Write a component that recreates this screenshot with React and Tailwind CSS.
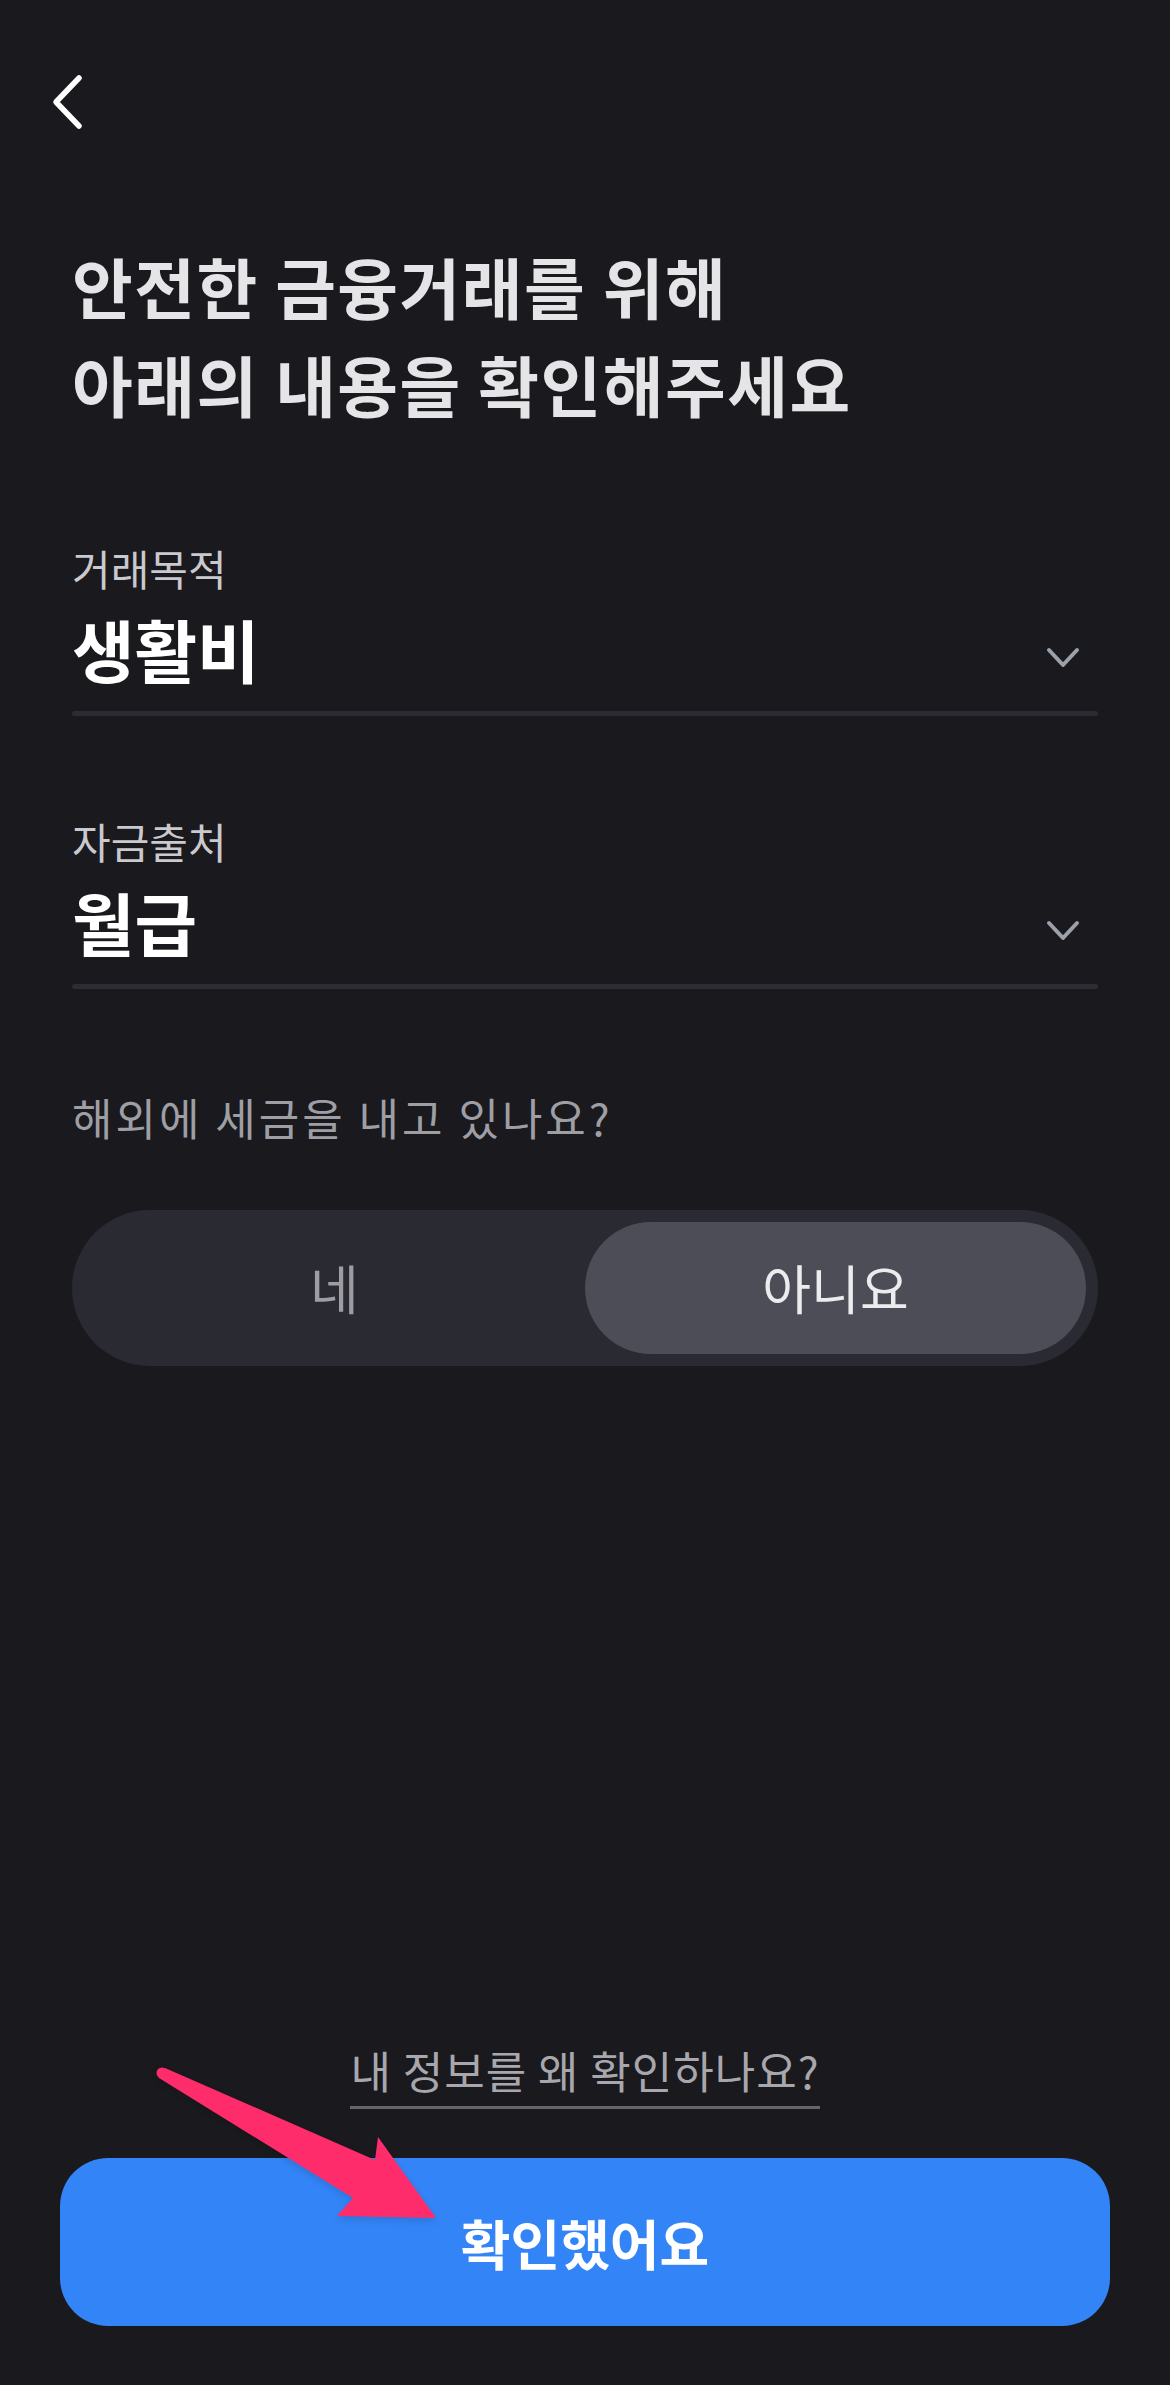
import { useState } from "react";

const font = { fontFamily: '"Noto Sans CJK KR", "Noto Sans", sans-serif' };

const BackIcon = () => (
  <svg width="36" height="56" viewBox="0 0 36 56" fill="none">
    <path d="M31 4 L8 28 L31 52" stroke="#ffffff" strokeWidth="5.5" strokeLinecap="round" strokeLinejoin="round" />
  </svg>
);

const ChevronDown = () => (
  <svg width="34" height="22" viewBox="0 0 34 22" fill="none">
    <path d="M3 3 L17 18 L31 3" stroke="#9aa1ab" strokeWidth="4" strokeLinecap="round" strokeLinejoin="round" />
  </svg>
);

// 선택 필드 (라벨 + 값 + 밑줄)
const SelectField = ({ label, value }) => (
  <div className="flex flex-col">
    <div className="text-[42px] leading-[48px] text-[#c9c9ce]">{label}</div>
    <div className="mt-[17px] flex items-center justify-between">
      <span className="text-[68px] leading-[80px] font-semibold text-white">{value}</span>
      <span className="mr-[18px] mt-[18px]"><ChevronDown /></span>
    </div>
    <div className="mt-[22px] h-[5px] rounded-full bg-[#2c2c34]" />
  </div>
);

export default function App() {
  const [taxAbroad, setTaxAbroad] = useState(false);

  return (
    <div style={font} className="relative flex h-[2385px] w-[1170px] flex-col bg-[#1a191e]">
      {/* Header */}
      <div className="pl-[48px] pt-[74px]">
        <BackIcon />
      </div>

      <div className="flex flex-1 flex-col px-[72px]">
        <h1 className="mt-[106px] text-[66px] leading-[98px] tracking-[1.5px] font-bold text-[#e5e5e8]">
          안전한 금융거래를 위해
          <br />
          아래의 내용을 확인해주세요
        </h1>

        <div className="mt-[112px]">
          <SelectField label="거래목적" value="생활비" />
        </div>
        <div className="mt-[101px]">
          <SelectField label="자금출처" value="월급" />
        </div>

        <p className="mt-[103px] text-[44px] leading-[50px] tracking-[3px] text-[#9e9ea5]">해외에 세금을 내고 있나요?</p>

        {/* 네 / 아니요 토글 */}
        <div className="mt-[68px] flex rounded-full bg-[#2a2a32] p-[12px]">
          <button
            onClick={() => setTaxAbroad(true)}
            className={`flex h-[132px] flex-1 items-center justify-center rounded-full text-[53px] ${
              taxAbroad ? "bg-[#4d4d58] text-[#ececee]" : "text-[#9d9da3]"
            }`}
          >
            네
          </button>
          <button
            onClick={() => setTaxAbroad(false)}
            className={`flex h-[132px] flex-1 items-center justify-center rounded-full text-[53px] ${
              !taxAbroad ? "bg-[#4d4d58] text-[#ececee]" : "text-[#9d9da3]"
            }`}
          >
            아니요
          </button>
        </div>

        <div className="flex-1" />

        <div className="flex justify-center">
          <span className="border-b-[3px] border-[#66656c] pb-[11px] text-[44px] leading-[50px] tracking-[1px] text-[#a7a7ad]">
            내 정보를 왜 확인하나요?
          </span>
        </div>
      </div>

      <div className="px-[60px] pb-[59px] pt-[49px]">
        <button className="flex h-[168px] w-full items-center justify-center rounded-[48px] bg-[#3384f6] text-[54px] font-semibold text-white">
          확인했어요
        </button>
      </div>

      {/* annotation arrow */}
      <svg
        className="absolute left-[150px] top-[2060px] drop-shadow-md"
        width="300"
        height="170"
        viewBox="0 0 300 170"
      >
        <polygon points="15,8 225,100 228,77 286,158 187,156 203,138 9,18" fill="#ff2c6c" />
        <circle cx="12" cy="13" r="5.5" fill="#ff2c6c" />
      </svg>
    </div>
  );
}
